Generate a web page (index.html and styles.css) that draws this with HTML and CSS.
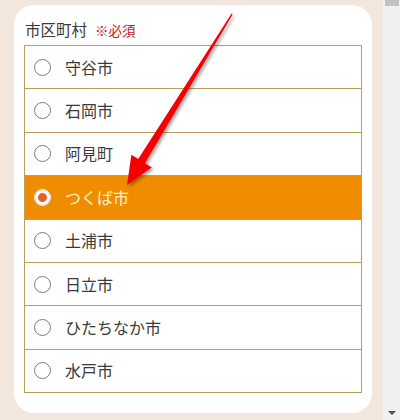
FILE: index.html
```html
<!DOCTYPE html>
<html lang="ja">
<head>
<meta charset="utf-8">
<link rel="stylesheet" href="styles.css">
</head>
<body>
<div class="page">
  <div class="card">
    <div class="label">市区町村<span class="req">※必須</span></div>
    <ul class="list">
      <li class="row"><span class="radio"></span><span class="name">守谷市</span></li>
      <li class="row"><span class="radio"></span><span class="name">石岡市</span></li>
      <li class="row"><span class="radio"></span><span class="name">阿見町</span></li>
      <li class="row selected"><span class="radio"></span><span class="name">つくば市</span></li>
      <li class="row"><span class="radio"></span><span class="name">土浦市</span></li>
      <li class="row"><span class="radio"></span><span class="name">日立市</span></li>
      <li class="row"><span class="radio"></span><span class="name">ひたちなか市</span></li>
      <li class="row"><span class="radio"></span><span class="name">水戸市</span></li>
    </ul>
  </div>
</div>
<div class="scrollbar">
  <div class="thumb"></div>
  <div class="down"></div>
</div>
<svg class="arrow" width="400" height="420" viewBox="0 0 400 420">
  <defs>
    <filter id="sh" x="-20%" y="-20%" width="140%" height="140%">
      <feDropShadow dx="2" dy="2" stdDeviation="1.6" flood-color="#000" flood-opacity="0.35"/>
    </filter>
  </defs>
  <polygon filter="url(#sh)" fill="#f40000"
    points="232.6,14.4 145,163.2 151.8,167.4 127,185 131.4,154.8 138.2,159 231.6,13.6"/>
</svg>
</body>
</html>
```
FILE: styles.css
```css
html, body {
  margin: 0;
  padding: 0;
}
body {
  display: flex;
  width: 400px;
  height: 420px;
  overflow: hidden;
  position: relative;
  font-family: "Noto Sans CJK JP", "Noto Sans", sans-serif;
}
.page {
  width: 383px;
  height: 420px;
  background: #f3e6dc;
  padding: 5px 11px 0 14px;
  box-sizing: border-box;
}
.card {
  width: 358px;
  height: 408px;
  background: #fff;
  border-radius: 20px;
  padding: 12px 10px 0 10px;
  box-sizing: border-box;
}
.label {
  height: 24px;
  line-height: 24px;
  margin: 0 0 4px 1px;
  font-size: 15.5px;
  color: #3a3a3a;
}
.req {
  margin-left: 8px;
  font-size: 13.5px;
  color: #c4161c;
}
.list {
  list-style: none;
  margin: 0;
  padding: 0;
  border: 1px solid #b8a05a;
  border-bottom: none;
}
.row {
  display: flex;
  align-items: center;
  gap: 14px;
  height: 42.4px;
  padding-left: 9px;
  border-bottom: 1px solid #b8a05a;
  font-size: 16px;
  color: #3a3a3a;
}
.radio {
  width: 15px;
  height: 15px;
  border: 1px solid #7a7a7a;
  border-radius: 50%;
  background: #fff;
  flex: none;
  box-sizing: content-box;
}
.selected {
  background: #f08c00;
  color: #fff0c8;
}
.selected .radio {
  border: 1px solid #fff;
  background: #e2602a;
  box-shadow: inset 0 0 0 3px #fff;
}
.name {
  line-height: 20px;
  padding-bottom: 1px;
}
.scrollbar {
  width: 17px;
  height: 420px;
  background: #f0f0f0;
  display: flex;
  flex-direction: column;
  align-items: center;
  justify-content: space-between;
}
.thumb {
  width: 14px;
  height: 6px;
  background: #c1c1c1;
  margin-left: 1px;
}
.down {
  width: 0;
  height: 0;
  border-left: 4px solid transparent;
  border-right: 4px solid transparent;
  border-top: 4px solid #505050;
  margin-bottom: 5px;
}
.arrow {
  position: absolute;
  left: 0;
  top: 0;
  pointer-events: none;
}
```
